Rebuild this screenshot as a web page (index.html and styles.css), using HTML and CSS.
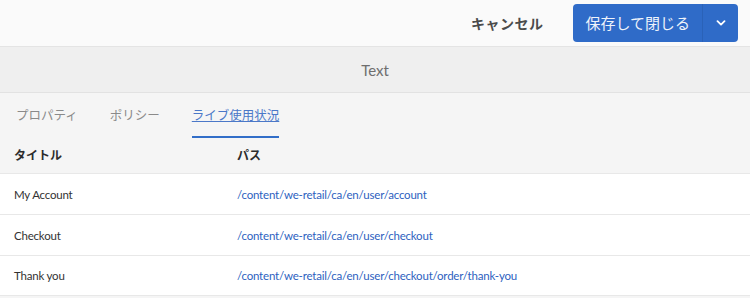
FILE: index.html
```html
<!DOCTYPE html>
<html lang="ja">
<head>
    <meta charset="UTF-8">
    <meta name="viewport" content="width=device-width, initial-scale=1.0">
    <title>Text - ライブ使用状況</title>
    <link rel="stylesheet" href="styles.css">
</head>
<body>
    <div class="toolbar">
        <button class="cancel">キャンセル</button>
        <div class="save-group">
            <button class="save">保存して閉じる</button>
            <button class="save-more" aria-label="その他">
                <svg width="10" height="6" viewBox="0 0 10 6"><path d="M1.5 1.2 L5 4.6 L8.5 1.2" fill="none" stroke="#fff" stroke-width="1.8" stroke-linecap="round" stroke-linejoin="round"/></svg>
            </button>
        </div>
    </div>

    <div class="title-bar">Text</div>

    <div class="panel">
        <div class="tabs">
            <a class="tab">プロパティ</a>
            <a class="tab">ポリシー</a>
            <a class="tab active">ライブ使用状況</a>
        </div>

        <div class="table">
            <div class="row head">
                <div class="cell">タイトル</div>
                <div class="cell">パス</div>
            </div>
            <div class="row">
                <div class="cell">My Account</div>
                <div class="cell"><a class="path">/content/we-retail/ca/en/user/account</a></div>
            </div>
            <div class="row">
                <div class="cell">Checkout</div>
                <div class="cell"><a class="path">/content/we-retail/ca/en/user/checkout</a></div>
            </div>
            <div class="row">
                <div class="cell">Thank you</div>
                <div class="cell"><a class="path">/content/we-retail/ca/en/user/checkout/order/thank-you</a></div>
            </div>
        </div>
    </div>
</body>
</html>
```

FILE: styles.css
```css
* {
    box-sizing: border-box;
}
body, html {
    margin: 0;
    height: 100%;
    font-family: Lato, "Noto Sans CJK JP", sans-serif;
    background-color: #f5f5f5;
    color: #323232;
}
.toolbar {
    height: 47px;
    display: flex;
    align-items: center;
    justify-content: flex-end;
    gap: 30px;
    padding: 0 12px 1px 0;
    background-color: #fafafa;
    border-bottom: 1px solid #e4e4e4;
}
button {
    font-family: "Noto Sans CJK JP", sans-serif;
    border: none;
    cursor: pointer;
}
.cancel {
    background: none;
    font-size: 14px;
    font-weight: bold;
    color: #4b4b4b;
    padding: 0;
    letter-spacing: 0.5px;
}
.save-group {
    display: flex;
    height: 38px;
    border-radius: 4px;
    overflow: hidden;
    background-color: #2f6bc8;
}
.save {
    background: none;
    color: #eef3fb;
    font-size: 15px;
    padding: 0 12px 0 12px;
    border-right: 1px solid #2a62b8;
}
.save-more {
    background: none;
    width: 35px;
    display: flex;
    align-items: center;
    justify-content: center;
}
.title-bar {
    height: 46px;
    display: flex;
    align-items: center;
    justify-content: center;
    background-color: #efefef;
    border-bottom: 1px solid #e2e2e2;
    font-family: Lato, sans-serif;
    font-size: 15px;
    color: #6e6e6e;
}
.tabs {
    display: flex;
    gap: 32px;
    padding-left: 16px;
    height: 45px;
}
.tab {
    display: flex;
    align-items: center;
    font-family: "Noto Sans CJK JP", sans-serif;
    font-size: 12.5px;
    color: #8a8a8a;
    border-bottom: 2px solid transparent;
}
.tab.active {
    color: #4b78c8;
    text-decoration: underline;
    border-bottom-color: #326ec8;
}
.row {
    display: grid;
    grid-template-columns: 223px 1fr;
    height: 41px;
    align-items: center;
    background-color: #fff;
    border-top: 1px solid #e8e8e8;
    font-size: 11.5px;
    letter-spacing: -0.2px;
}
.row:last-child {
    border-bottom: 1px solid #e8e8e8;
}
.row.head {
    height: 35px;
    padding-bottom: 3px;
    border-top: none;
    background-color: #f5f5f5;
    font-family: "Noto Sans CJK JP", sans-serif;
    font-weight: bold;
    font-size: 12px;
    letter-spacing: 0;
    color: #2c2c2c;
}
.cell {
    padding-left: 14px;
}
.path {
    color: #2d5fc0;
    text-decoration: none;
}
```
